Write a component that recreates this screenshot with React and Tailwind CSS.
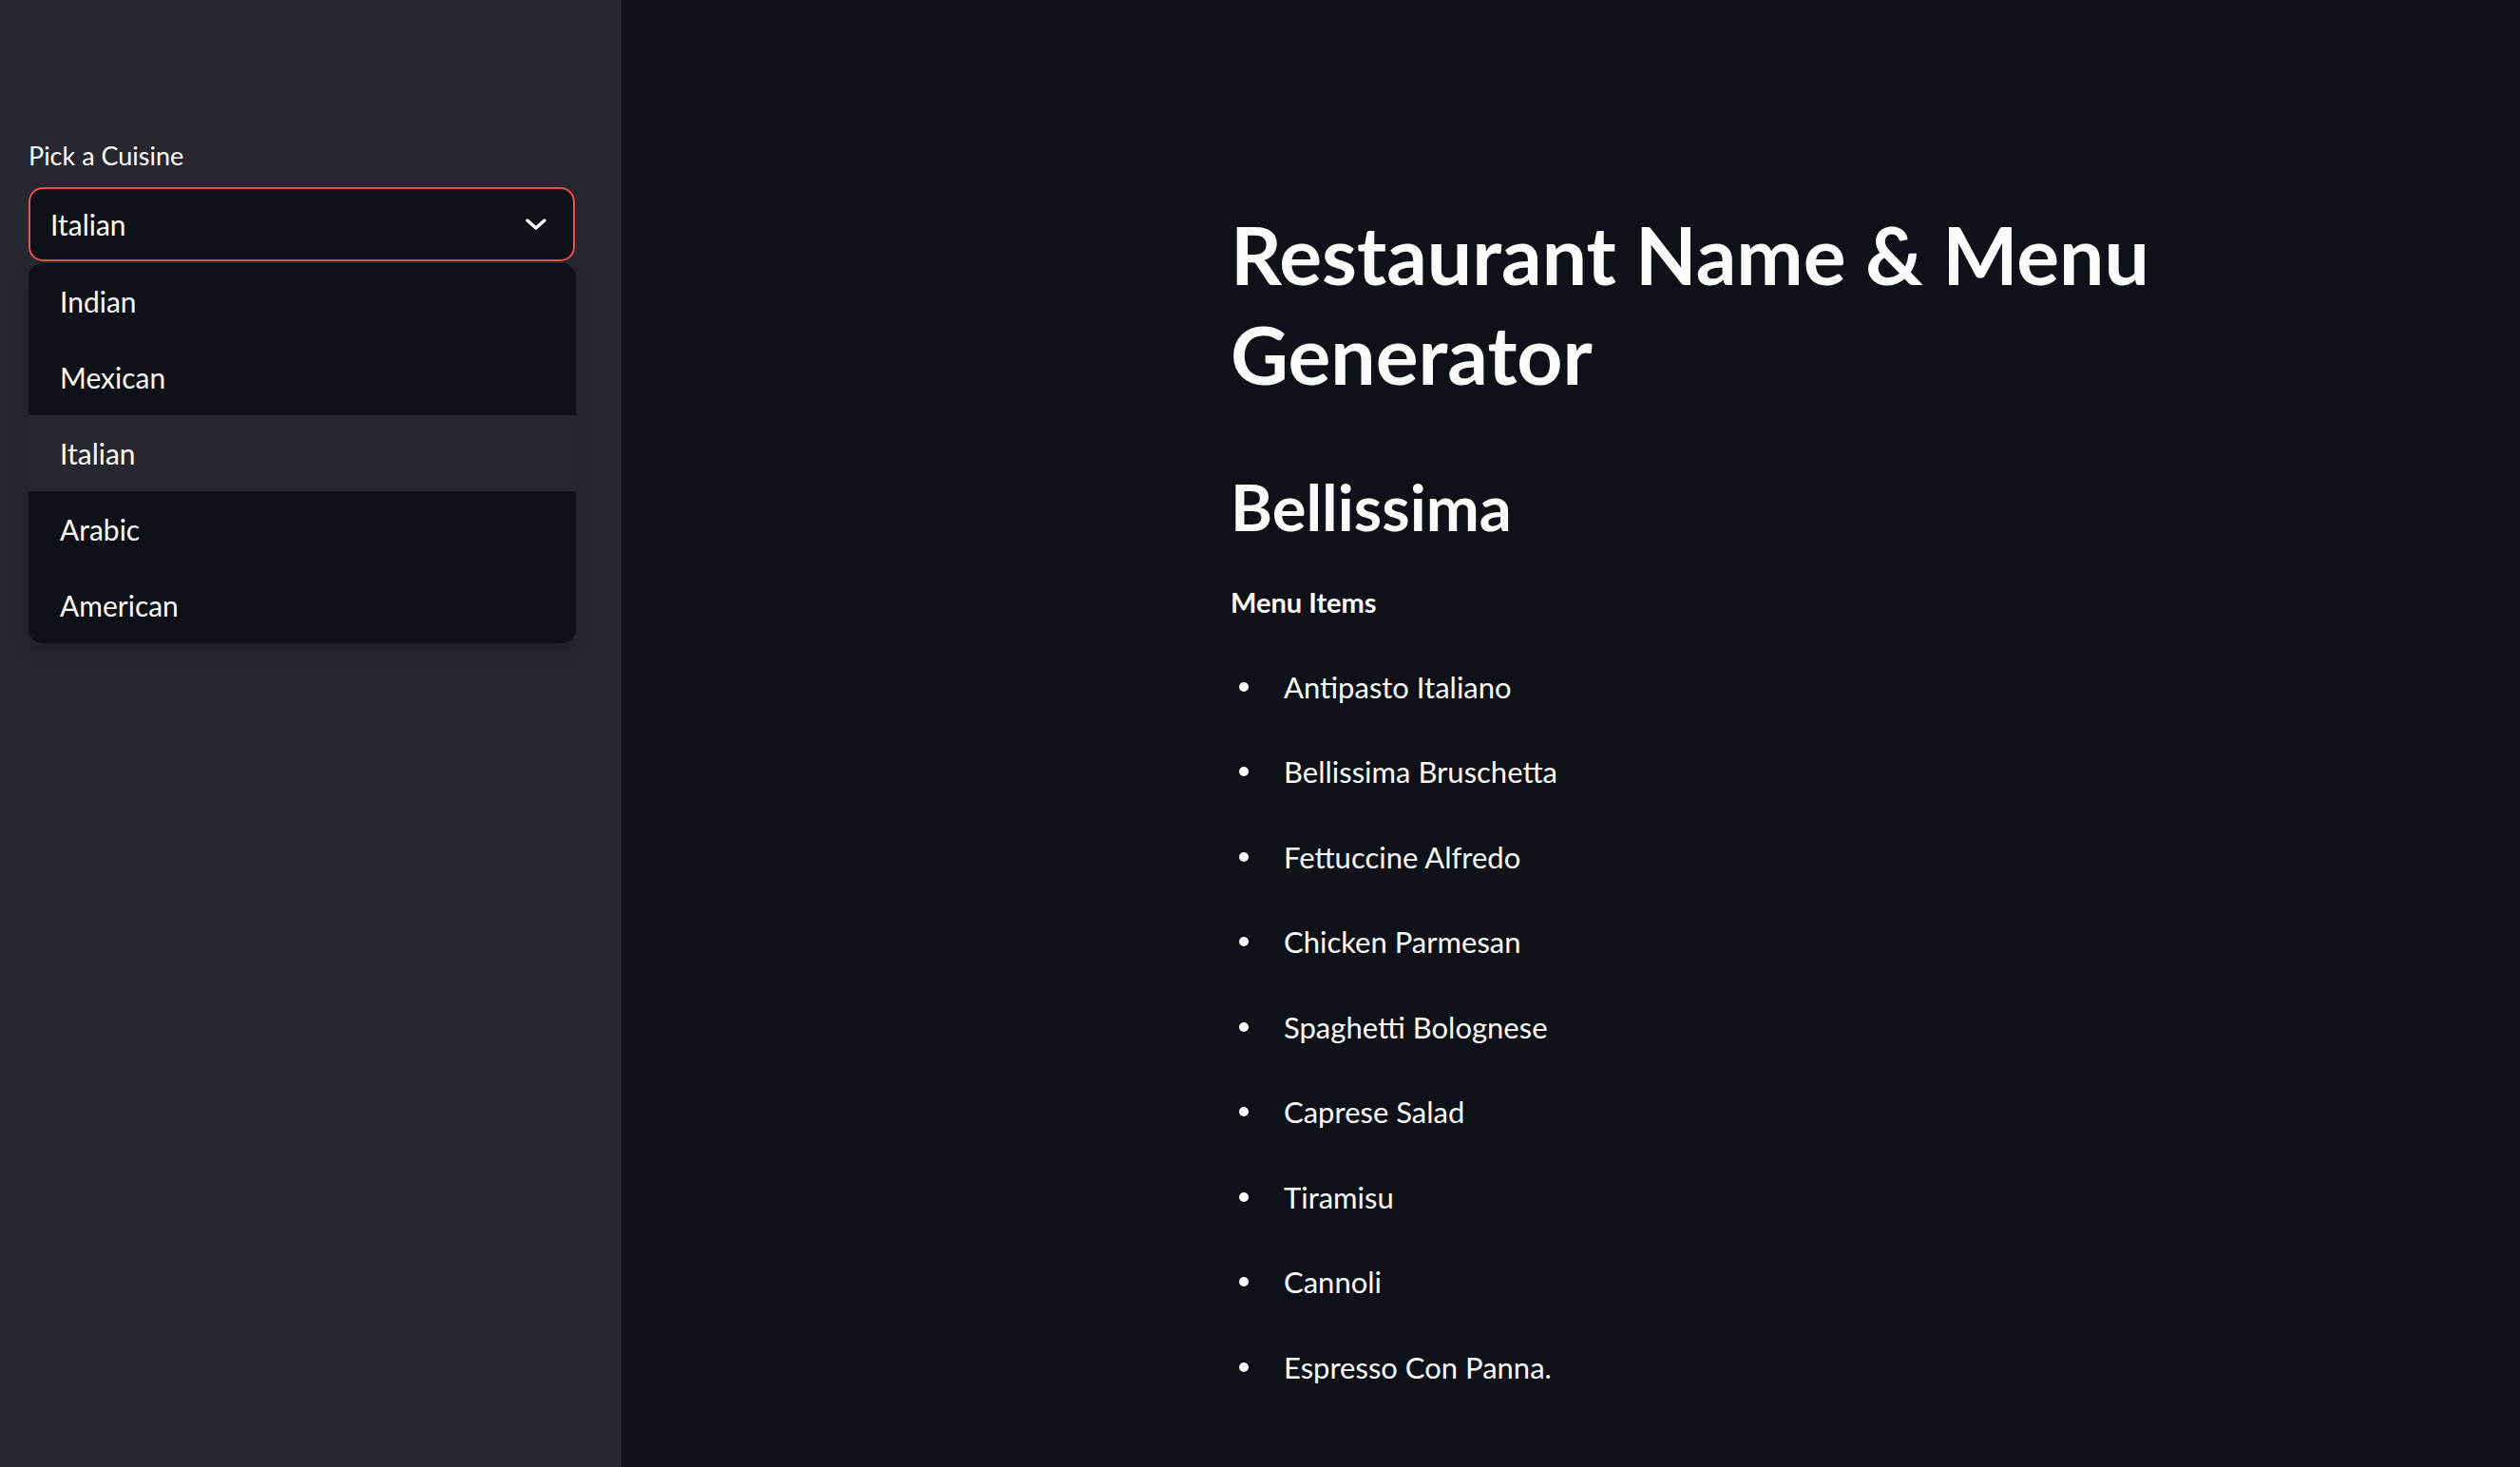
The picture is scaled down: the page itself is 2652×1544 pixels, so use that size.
import { useState } from 'react';

const cuisines = ['Indian', 'Mexican', 'Italian', 'Arabic', 'American'];

const menuItems = [
    'Antipasto Italiano',
    'Bellissima Bruschetta',
    'Fettuccine Alfredo',
    'Chicken Parmesan',
    'Spaghetti Bolognese',
    'Caprese Salad',
    'Tiramisu',
    'Cannoli',
    'Espresso Con Panna.',
];

function Chevron() {
    return (
        <svg width="24" height="14" viewBox="0 0 24 14" fill="none">
            <polyline points="3,3 12,11 21,3" stroke="#fafafa" strokeWidth="3.5" strokeLinecap="round" strokeLinejoin="round" />
        </svg>
    );
}

export default function App() {
    const [cuisine] = useState('Italian');

    return (
        <div className="flex w-full h-[1544px] bg-[#0e1117] text-[#fafafa] font-['Lato',sans-serif]">
            {/* Sidebar */}
            <aside className="w-[654px] shrink-0 bg-[#262730] pt-[146px] px-[30px]">
                <label className="block text-[27px] leading-[36px]">Pick a Cuisine</label>

                <div className="relative mt-[15px] w-[575px]">
                    <div className="h-[78px] flex items-center justify-between rounded-[15px] border-2 border-[#e8524e] bg-[#0e1117] pl-[21px] pr-[27px]">
                        <span className="text-[30px] leading-[36px]">{cuisine}</span>
                        <Chevron />
                    </div>

                    {/* Open dropdown */}
                    <ul className="absolute left-0 top-[80px] w-[576px] rounded-[15px] overflow-hidden bg-[#0e1117] shadow-[0_6px_18px_rgba(0,0,0,0.22)] z-10">
                        {cuisines.map((c) => (
                            <li
                                key={c}
                                className={`h-[80px] flex items-center pl-[33px] text-[30px] leading-[36px] ${c === cuisine ? 'bg-[#262730]' : ''}`}
                            >
                                {c}
                            </li>
                        ))}
                    </ul>
                </div>
            </aside>

            {/* Main */}
            <main className="flex-1 pl-[641px] pt-[215px]">
                <h1 className="text-[84px] leading-[105px] font-bold">
                    Restaurant Name &amp; Menu<br />Generator
                </h1>

                <h2 className="mt-[68px] text-[67px] leading-[80px] font-bold">Bellissima</h2>

                <p className="mt-[41px] text-[29px] leading-[40px] font-bold">Menu Items</p>

                <ul className="mt-[24px]">
                    {menuItems.map((item) => (
                        <li key={item} className="h-[89.5px] flex items-center text-[31px]">
                            <span className="ml-[9px] mr-[37px] w-[10px] h-[10px] rounded-full bg-[#fafafa]" />
                            {item}
                        </li>
                    ))}
                </ul>
            </main>
        </div>
    );
}
